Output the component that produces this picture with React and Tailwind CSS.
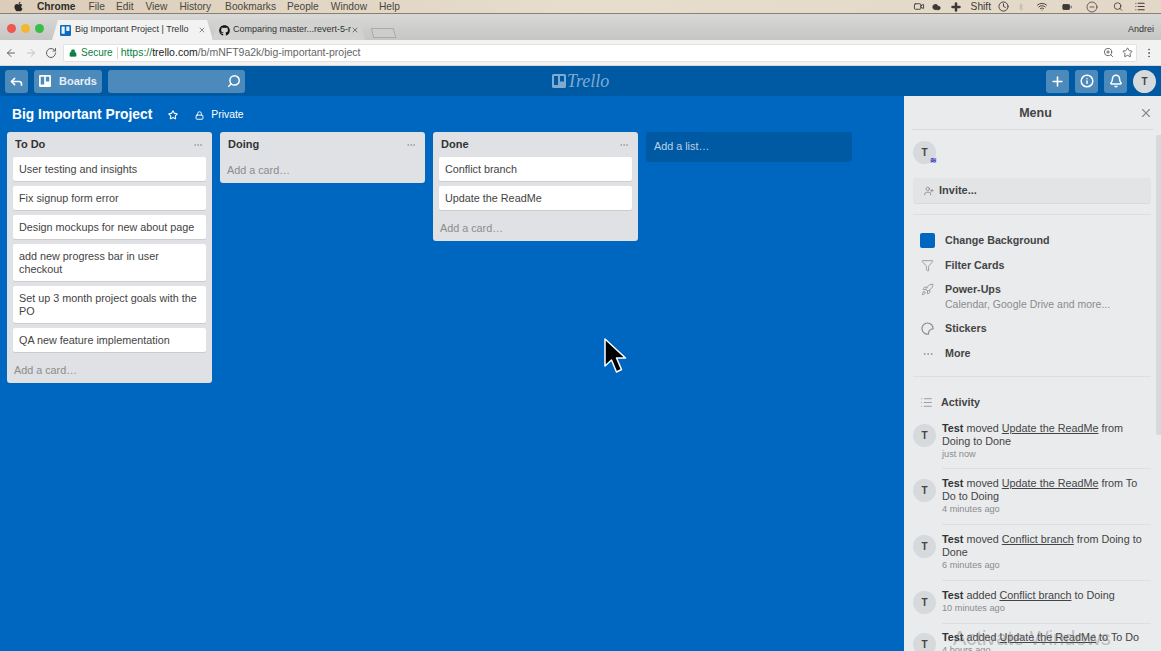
import React from "react";
import { ArrowLeft, ArrowRight, RotateCw, Lock, ZoomIn, Star, EllipsisVertical, Reply, Search, Plus, Info, Bell, X, UserPlus, Funnel, Rocket, Ellipsis, Wifi, Battery, Bluetooth, Video, Clock, MinusCircle, List, Cloud } from "lucide-react";
import { FaApple, FaGithub } from "react-icons/fa";

const font = { fontFamily: '"Liberation Sans", Arial, sans-serif' };

function BoardIcon({ className, fill = "currentColor" }) {
  return (
    <svg viewBox="0 0 14 14" className={className}>
      <path fillRule="evenodd" fill={fill} d="M1.500 0h11A1.500 1.500 0 0 1 14 1.500v11a1.500 1.500 0 0 1-1.500 1.500h-11A1.500 1.500 0 0 1 0 12.500v-11A1.500 1.500 0 0 1 1.500 0zM2 2v9h4V2zm6 0v5.500h4V2z" />
    </svg>
  );
}

function MacBar() {
  const items = [["File", "ml-[13px]"], ["Edit", "ml-[11px]"], ["View", "ml-[12px]"], ["History", "ml-[12px]"], ["Bookmarks", "ml-[14px]"], ["People", "ml-[11px]"], ["Window", "ml-[12px]"], ["Help", "ml-[12px]"]];
  return (
    <div className="h-[14px] flex items-center bg-gradient-to-r from-[#dccdb9] via-[#e6ddcd] to-[#e3d8c8] border-b border-[#8a7f70] text-[10.200px] text-[#4a4640] shrink-0 overflow-hidden">
      <FaApple className="ml-[13px] w-[11px] h-[11px] text-[#2b2926]" />
      <span className="ml-[13px] font-bold text-[#2e2b27]">Chrome</span>
      {items.map(([t, m]) => <span key={t} className={m}>{t}</span>)}
      <div className="ml-auto mr-[14px] flex items-center text-[#3d3a35]">
        <Video className="w-[14px] h-[11px]" />
        <Cloud className="ml-[6px] w-[9px] h-[10px] fill-current" />
        <Plus className="ml-[9px] w-[12px] h-[12px]" strokeWidth={5} />
        <span className="ml-[9px]">Shift</span>
        <Clock className="ml-[7px] w-[11px] h-[11px]" />
        <Bluetooth className="ml-[8px] w-[8px] h-[10px] text-[#b5aea2]" />
        <Wifi className="ml-[10px] w-[14px] h-[11px]" />
        <Battery className="ml-[10px] w-[16px] h-[10px] fill-current" />
        <MinusCircle className="ml-[11px] w-[12px] h-[12px]" strokeWidth={1.500} />
        <Search className="ml-[15px] w-[10px] h-[11px]" />
        <List className="ml-[10px] w-[14px] h-[11px]" strokeWidth={2.500} />
      </div>
    </div>
  );
}

function TabStrip() {
  return (
    <div className="h-[26px] flex items-end bg-gradient-to-b from-[#d8d8d6] to-[#c6c6c4] shrink-0 relative">
      <div className="w-[52px] h-full flex items-center gap-[5px] pl-[7px] pt-[2px]">
        <span className="w-[9px] h-[9px] rounded-full bg-[#f0574f]" />
        <span className="w-[9px] h-[9px] rounded-full bg-[#f5b62f]" />
        <span className="w-[9px] h-[9px] rounded-full bg-[#39bd48]" />
      </div>
      <div className="w-[161px] h-[20px] bg-[#f2f2f2] flex items-center pl-[8px] pr-[7px] [clip-path:polygon(0_100%,6px_0,calc(100%-6px)_0,100%_100%)]">
        <BoardIcon className="w-[11px] h-[11px]" fill="#0a6cc2" />
        <span className="ml-[4px] text-[9px] text-[#333] whitespace-nowrap">Big Important Project | Trello</span>
        <X className="ml-auto w-[8px] h-[8px] text-[#555]" />
      </div>
      <div className="w-[153px] h-[20px] -ml-[1px] bg-[#d2d2d0] flex items-center pl-[7px] pr-[6px] [clip-path:polygon(0_100%,6px_0,calc(100%-6px)_0,100%_100%)]">
        <FaGithub className="w-[11px] h-[11px] text-[#111] shrink-0" />
        <span className="ml-[3px] text-[9px] text-[#333] whitespace-nowrap overflow-hidden w-[118px]">Comparing master...revert-5-m</span>
        <X className="ml-auto w-[8px] h-[8px] text-[#444]" />
      </div>
      <div className="ml-[7px] mb-[2px] w-[23px] h-[10px] bg-[#cdcdcb] border border-[#aaa] [transform:skewX(15deg)]" />
      <span className="absolute right-[7px] top-[9px] text-[9px] text-[#333]">Andrei</span>
    </div>
  );
}

function AddressBar() {
  return (
    <div className="h-[26px] flex items-center bg-[#f2f2f2] border-b border-[#d8d8d8] shrink-0 text-[#5f6368]">
      <ArrowLeft className="ml-[5px] w-[12px] h-[12px]" />
      <ArrowRight className="ml-[8px] w-[12px] h-[12px] text-[#c2c2c2]" />
      <RotateCw className="ml-[8px] w-[12px] h-[12px]" />
      <div className="ml-[6px] w-[1074px] h-[18px] bg-white rounded-[2px] border border-[#e2e2e2] flex items-center text-[10.500px]">
        <Lock className="ml-[5px] w-[8px] h-[8px] text-[#0b8043] fill-current" />
        <span className="ml-[4px] text-[10px] text-[#0b8043] pr-[4px] border-r border-[#d6d6d6] leading-[12px]">Secure</span>
        <span className="ml-[3px] whitespace-nowrap"><span className="text-[#0b8043]">https://</span><span className="text-[#222]">trello.com</span><span className="text-[#666]">/b/mNFT9a2k/big-important-project</span></span>
        <ZoomIn className="ml-auto w-[11px] h-[11px]" />
        <Star className="ml-[8px] mr-[3px] w-[11px] h-[11px]" />
      </div>
      <EllipsisVertical className="ml-[6px] w-[12px] h-[12px]" />
    </div>
  );
}

function HeaderBtn({ children, className = "" }) {
  return <div className={`h-[23px] rounded-[3px] bg-[#4d8abc] flex items-center justify-center text-white ${className}`}>{children}</div>;
}

function Header() {
  return (
    <div className="h-[30px] bg-[#0059a3] flex items-center pl-[5px] pr-[5px] relative shrink-0">
      <HeaderBtn className="w-[23px]"><Reply className="w-[15px] h-[15px]" strokeWidth={2.500} /></HeaderBtn>
      <HeaderBtn className="ml-[6px] w-[68px] justify-start pl-[5px]">
        <BoardIcon className="w-[12px] h-[12px]" />
        <span className="ml-[8px] text-[11px] font-bold text-[#e6eef6]">Boards</span>
      </HeaderBtn>
      <HeaderBtn className="ml-[6px] w-[137px] justify-end pr-[4px]"><Search className="w-[14px] h-[14px] -scale-x-100" strokeWidth={2.500} /></HeaderBtn>
      <div className="absolute left-[552px] top-[5px] flex items-center text-[#7fabd1]">
        <BoardIcon className="w-[14px] h-[14px]" />
        <span className="ml-[1px] text-[18px] leading-[20px] italic" style={{ fontFamily: '"Liberation Serif", serif' }}>Trello</span>
      </div>
      <HeaderBtn className="ml-auto w-[23px]"><Plus className="w-[15px] h-[15px]" strokeWidth={2.500} /></HeaderBtn>
      <HeaderBtn className="ml-[6px] w-[23px]"><Info className="w-[14px] h-[14px]" strokeWidth={2.500} /></HeaderBtn>
      <HeaderBtn className="ml-[6px] w-[23px]"><Bell className="w-[14px] h-[14px]" strokeWidth={2.500} /></HeaderBtn>
      <div className="ml-[6px] w-[23px] h-[23px] rounded-full bg-[#d6dadc] flex items-center justify-center text-[10px] font-bold text-[#444]">T</div>
    </div>
  );
}

function Card({ children }) {
  return <div className="bg-white rounded-[2px] px-[6px] pt-[6px] pb-[5px] text-[10.800px] leading-[13px] mb-[5px] text-[#444] shadow-[0_1px_0_#ccc]">{children}</div>;
}

function ListCol({ title, cards }) {
  return (
    <div className="w-[205px] shrink-0 bg-[#dfe1e4] rounded-[3px] self-start">
      <div className="h-[25px] flex items-center pl-[8px] pr-[9px]">
        <span className="text-[11px] font-bold text-[#333]">{title}</span>
        <Ellipsis className="ml-auto w-[10px] h-[10px] text-[#999]" />
      </div>
      {cards.length > 0 && (
        <div className="px-[6px]">
          {cards.map((c) => <Card key={c}>{c}</Card>)}
        </div>
      )}
      <div className="px-[7px] pt-[7px] pb-[6px] text-[10.800px] leading-[13px] text-[#8c8c8c]">Add a card…</div>
    </div>
  );
}

function MenuRow({ icon, label, sub, className = "" }) {
  return (
    <div className={`flex items-start pl-[16px] ${className}`}>
      <div className="w-[15px] h-[15px] flex items-center justify-center text-[#8c8c8c] shrink-0">{icon}</div>
      <div className="ml-[10px]">
        <div className="text-[10.700px] leading-[15px] font-bold text-[#444]">{label}</div>
        {sub && <div className="text-[10.500px] leading-[15px] text-[#8c8c8c]">{sub}</div>}
      </div>
    </div>
  );
}

function Act({ lines, time, spacing }) {
  return (
    <div className="flex pl-[9px] pr-[10px]">
      <div className="w-[23px] h-[23px] mt-[2px] rounded-full bg-[#d6dadc] flex items-center justify-center text-[10px] font-bold text-[#444] shrink-0">T</div>
      <div className={`ml-[6px] flex-1 text-[10.800px] leading-[13px] text-[#444] ${spacing}`}>
        <div>{lines}</div>
        <div className="text-[9.200px] text-[#8c8c8c]">{time}</div>
      </div>
    </div>
  );
}

const L = ({ children }) => <span className="underline">{children}</span>;
const B = () => <span className="font-bold text-[#333]">Test</span>;

function StickerIcon() {
  return (
    <svg viewBox="0 0 14 14" className="w-[13px] h-[13px]" fill="none" stroke="currentColor" strokeWidth="1.300">
      <path d="M8 13A6 6 0 1 1 13 7.500C10.500 7.500 8 9.500 8 13Z" strokeLinejoin="round" />
    </svg>
  );
}

function Sidebar() {
  return (
    <div className="w-[257px] shrink-0 bg-[#e9ebed] relative h-full overflow-hidden">
      <div className="h-[34px] mx-[8px] flex items-center justify-center border-b border-[#d6dadc] relative">
        <span className="ml-[6px] pt-[2px] text-[12.500px] font-bold text-[#444]">Menu</span>
        <X className="absolute right-[0px] top-[10px] w-[14px] h-[14px] text-[#8c8c8c]" />
      </div>
      <div className="absolute right-0 top-[39px] w-[5px] h-[300px] bg-[#d6dadc] rounded-l-[2px]" />
      <div className="pl-[9px] pr-[10px] pt-[11px]">
        <div className="w-[23px] h-[23px] rounded-full bg-[#d6dadc] flex items-center justify-center text-[10px] font-bold text-[#444] relative">
          T
          <span className="absolute right-[-1px] bottom-[0px] text-[8px] leading-[7px] text-[#3a3ac0] font-bold">≋</span>
        </div>
        <div className="mt-[14px] h-[25px] rounded-[3px] bg-[#e2e4e6] shadow-[0_1px_0_#d6dadc] flex items-center pl-[11px]">
          <UserPlus className="w-[10px] h-[10px] text-[#8c8c8c]" />
          <span className="ml-[5px] text-[11px] font-bold text-[#444]">Invite...</span>
        </div>
        <div className="mt-[11px] border-b border-[#dcdfe1]" />
      </div>
      <div className="pt-[18px]">
        <MenuRow icon={<span className="w-[15px] h-[15px] bg-[#0067c0] rounded-[2px] block" />} label="Change Background" />
        <MenuRow icon={<Funnel className="w-[13px] h-[13px]" strokeWidth={1.500} />} label="Filter Cards" className="mt-[10px]" />
        <MenuRow icon={<Rocket className="w-[13px] h-[13px]" strokeWidth={1.500} />} label="Power-Ups" sub="Calendar, Google Drive and more..." className="mt-[9px]" />
        <MenuRow icon={<StickerIcon />} label="Stickers" className="mt-[9px]" />
        <MenuRow icon={<Ellipsis className="w-[12px] h-[12px]" strokeWidth={1.500} />} label="More" className="mt-[10px]" />
      </div>
      <div className="ml-[9px] mr-[10px] mt-[15px] border-b border-[#dcdfe1]" />
      <div className="pt-[14px] pl-[16px] flex items-center h-[45px] pb-[9px]">
        <List className="w-[13px] h-[13px] text-[#8c8c8c]" strokeWidth={1.500} />
        <span className="ml-[8px] text-[10.800px] font-bold text-[#444]">Activity</span>
      </div>
      <Act lines={<><B /> moved <L>Update the ReadMe</L> from Doing to Done</>} time="just now" spacing="pb-[7px] mb-[8px] border-b border-[#dcdfe1]" />
      <Act lines={<><B /> moved <L>Update the ReadMe</L> from To Do to Doing</>} time="4 minutes ago" spacing="pb-[8px] mb-[8px] border-b border-[#dcdfe1]" />
      <Act lines={<><B /> moved <L>Conflict branch</L> from Doing to Done</>} time="6 minutes ago" spacing="pb-[8px] mb-[8px] border-b border-[#dcdfe1]" />
      <Act lines={<><B /> added <L>Conflict branch</L> to Doing</>} time="10 minutes ago" spacing="pb-[8px] mb-[7px] border-b border-[#dcdfe1]" />
      <Act lines={<><B /> added <L>Update the ReadMe</L> to To Do</>} time="4 hours ago" spacing="" />
      <span className="absolute left-[49px] top-[527px] text-[20px] text-[#6f6f6f]/40 whitespace-nowrap">Activate Windows</span>
    </div>
  );
}

function Board() {
  return (
    <div className="flex-1 flex min-h-0 bg-[#0067c0] relative overflow-hidden">
      <div className="flex-1 min-w-0">
        <div className="h-[36px] flex items-center pl-[12px] pt-[2px] text-white">
          <span className="text-[13.800px] font-bold">Big Important Project</span>
          <Star className="ml-[16px] w-[10px] h-[10px]" strokeWidth={2.500} />
          <Lock className="ml-[17px] w-[9px] h-[9px]" strokeWidth={2.500} />
          <span className="ml-[7px] text-[10.400px]">Private</span>
        </div>
        <div className="flex gap-[8px] pl-[7px]">
          <ListCol title="To Do" cards={["User testing and insights", "Fix signup form error", "Design mockups for new about page", "add new progress bar in user checkout", "Set up 3 month project goals with the PO", "QA new feature implementation"]} />
          <ListCol title="Doing" cards={[]} />
          <ListCol title="Done" cards={["Conflict branch", "Update the ReadMe"]} />
          <div className="w-[206px] h-[30px] shrink-0 rounded-[3px] bg-[#0059a3] text-[#b9d3ea] text-[10.800px] flex items-center pl-[8px] pb-[1px]">Add a list…</div>
        </div>
      </div>
      <Sidebar />
      <svg viewBox="0 0 24 38" className="absolute left-[603px] top-[241px] w-[24px] h-[38px]">
        <path d="M2 2 L2 29 L8.500 23 L13.500 35 L18.500 32.500 L13.500 21 L22.500 21 Z" fill="#000" stroke="#fff" strokeWidth="1.500" strokeLinejoin="round" />
      </svg>
    </div>
  );
}

export default function App() {
  return (
    <div className="w-[1161px] h-[651px] flex flex-col overflow-hidden" style={font}>
      <MacBar />
      <TabStrip />
      <AddressBar />
      <Header />
      <Board />
    </div>
  );
}
